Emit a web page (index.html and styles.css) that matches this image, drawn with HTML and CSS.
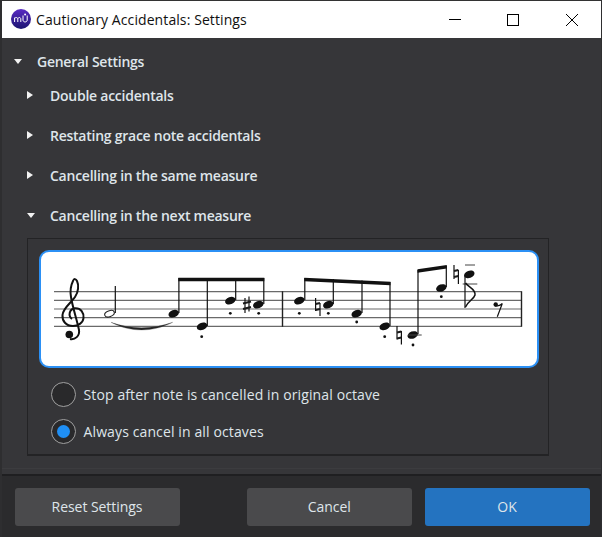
FILE: index.html
```html
<!DOCTYPE html>
<html lang="en">

<head>
    <meta charset="UTF-8">
    <title>Cautionary Accidentals: Settings</title>
    <link rel="stylesheet" href="styles.css">
</head>

<body>
    <div class="window">
        <div class="titlebar">
            <svg class="app-logo" viewBox="0 0 20 20" width="20" height="20">
                <defs>
                    <linearGradient id="logo-fill" x1="0" y1="0" x2="0" y2="1">
                        <stop offset="0" stop-color="#5a2bc4" />
                        <stop offset="1" stop-color="#1a1470" />
                    </linearGradient>
                </defs>
                <circle cx="10" cy="10" r="10" fill="url(#logo-fill)" />
                <path d="M3.6 13V8.6M3.6 9.4C4.4 8.2 6.4 8.2 6.8 9.6V13M6.8 9.6C7.4 8.2 9.4 8.2 9.8 9.6V13" fill="none" stroke="#fff" stroke-width="1" />
                <path d="M12 6.5V11C12 13.6 16.2 13.6 16.2 11V6.5" fill="none" stroke="#fff" stroke-width="1" />
                <circle cx="14.1" cy="5.6" r="1" fill="#fff" />
            </svg>
            <div class="title">Cautionary Accidentals: Settings</div>
            <div class="win-controls">
                <div class="win-btn">
                    <svg viewBox="0 0 12 12" width="12" height="12"><path d="M0 5.5H12" stroke="#000" fill="none" /></svg>
                </div>
                <div class="win-btn">
                    <svg viewBox="0 0 12 12" width="12" height="12"><rect x="0.5" y="0.5" width="11" height="11" stroke="#000" fill="none" /></svg>
                </div>
                <div class="win-btn">
                    <svg viewBox="0 0 12 12" width="12" height="12"><path d="M0 0L12 12M12 0L0 12" stroke="#000" fill="none" /></svg>
                </div>
            </div>
        </div>

        <div class="content">
            <div class="tree-row top-row"><span class="arrow-down"></span>General Settings</div>
            <div class="tree-row"><span class="arrow-right"></span>Double accidentals</div>
            <div class="tree-row"><span class="arrow-right"></span>Restating grace note accidentals</div>
            <div class="tree-row"><span class="arrow-right"></span>Cancelling in the same measure</div>
            <div class="tree-row"><span class="arrow-down"></span>Cancelling in the next measure</div>

            <div class="panel">
                <div class="score-card">
                    <svg class="score" viewBox="41 252 495.5 114" width="495.5" height="114">
                        <g class="staff">
                            <path d="M54 291.7H521.5M54 300.3H521.5M54 309H521.5M54 317.7H521.5M54 326.3H521.5" />
                        </g>
                        <g class="bars">
                            <path d="M282.5 291.2V326.8M521.5 291.2V326.8" />
                        </g>

                        <!-- clef -->
                        <path class="clef" d="M72 319C68 316 69 309 75 308.3C81 308 84 313 83.5 318C83 323 78 326 73 326C66 326 62 321 62.5 315C63 308 71 303 75 297C78.5 292 79 285 77 281C76 279 74 278 73 281C71 285 70 291 71 297C72.5 307 77 320 79 330C80 336 75 340 70 339" />
                        <circle cx="69.3" cy="334.5" r="3.8" />

                        <!-- first group -->
                        <ellipse class="hollow" cx="109.5" cy="313.7" rx="5" ry="2.9" transform="rotate(-20 109.5 313.7)" />
                        <path class="stem" d="M115.3 286V313" />
                        <path class="tie" d="M111 322.3C130 332.5 153 332.5 172.7 322.3C153 329.5 130 329.5 111 322.3Z" />

                        <ellipse cx="173.7" cy="313.7" rx="5.4" ry="3.6" transform="rotate(-20 173.7 313.7)" />
                        <ellipse cx="202" cy="326.3" rx="5.4" ry="3.6" transform="rotate(-20 202 326.3)" />
                        <ellipse cx="230.3" cy="300.7" rx="5.4" ry="3.6" transform="rotate(-20 230.3 300.7)" />
                        <ellipse cx="258.3" cy="304.7" rx="5.4" ry="3.6" transform="rotate(-20 258.3 304.7)" />
                        <path class="stem" d="M178.9 278V313M207.3 278V326M235.7 278V300M263.8 278V304" />
                        <path d="M178.3 277.7H264.3V281.2H178.3Z" />
                        <circle cx="201.7" cy="336.7" r="1.4" />
                        <circle cx="230.3" cy="313.3" r="1.4" />
                        <circle cx="258.7" cy="313.3" r="1.4" />
                        <path class="stem" d="M245 298V313M249 296.5V311.5" />
                        <path class="acc-bar" d="M243 303.5L251 301.5M243 309L251 307" />

                        <!-- second group -->
                        <ellipse cx="299.3" cy="300.7" rx="5.4" ry="3.6" transform="rotate(-20 299.3 300.7)" />
                        <ellipse cx="328.3" cy="304.7" rx="5.4" ry="3.6" transform="rotate(-20 328.3 304.7)" />
                        <ellipse cx="356.7" cy="313.7" rx="5.4" ry="3.6" transform="rotate(-20 356.7 313.7)" />
                        <ellipse cx="384.7" cy="326.3" rx="5.4" ry="3.6" transform="rotate(-20 384.7 326.3)" />
                        <path class="stem" d="M304.8 278V300M333.3 279V304M362 280.5V313M390 282V326" />
                        <path d="M304.3 277.7L390.5 281.7V285.2L304.3 281.2Z" />
                        <circle cx="299.3" cy="313.3" r="1.4" />
                        <circle cx="328.3" cy="313.3" r="1.4" />
                        <circle cx="356.7" cy="322" r="1.4" />
                        <circle cx="384.7" cy="336.7" r="1.4" />
                        <path class="stem" d="M315.6 298V311M320 303V316" />
                        <path class="acc-bar" d="M315.6 304L320 303M315.6 310L320 309" />

                        <!-- third group -->
                        <ellipse cx="412.7" cy="335" rx="5.4" ry="3.6" transform="rotate(-20 412.7 335)" />
                        <path class="ledger" d="M408 335H421.7" />
                        <ellipse cx="441.3" cy="288" rx="5.4" ry="3.6" transform="rotate(-20 441.3 288)" />
                        <path class="stem" d="M418 270V334M446.3 266V287" />
                        <path d="M417.5 269.3L446.8 265V268.5L417.5 272.8Z" />
                        <circle cx="413" cy="345" r="1.4" />
                        <circle cx="441.3" cy="296.7" r="1.4" />
                        <path class="stem" d="M397 326V339.5M401.4 331V344.5" />
                        <path class="acc-bar" d="M397 332.5L401.4 331.5M397 338.5L401.4 337.5" />
                        <path class="stem" d="M454 265V279M458.4 270V284" />
                        <path class="acc-bar" d="M454 271L458.4 270M454 277L458.4 276" />

                        <ellipse cx="469.3" cy="274.3" rx="5.4" ry="3.6" transform="rotate(-20 469.3 274.3)" />
                        <path class="ledger" d="M465 265H475M462.7 284H477.3" />
                        <path class="stem" d="M465 275V308" />
                        <path class="flag" d="M465.5 283C468 287 476 289 475 295C474 299 468 301 465.5 307" />

                        <circle cx="495.7" cy="304.5" r="2.2" />
                        <path class="stem" d="M495 306C498 306 500.5 305.5 502.3 303.5L497.3 316.7" />
                    </svg>
                </div>

                <div class="radio-row">
                    <span class="radio"></span>
                    <span>Stop after note is cancelled in original octave</span>
                </div>
                <div class="radio-row">
                    <span class="radio checked"></span>
                    <span>Always cancel in all octaves</span>
                </div>
            </div>

            <div class="tree-end"></div>
        </div>

        <div class="footer">
            <button class="btn">Reset Settings</button>
            <div class="footer-right">
                <button class="btn">Cancel</button>
                <button class="btn primary">OK</button>
            </div>
        </div>
    </div>
</body>

</html>
```

FILE: styles.css
```css
* {
    box-sizing: border-box;
}

html,
body {
    margin: 0;
    padding: 0;
}

body {
    font-family: "Open Sans", "Noto Sans", sans-serif;
    font-size: 14px;
    color: #e4e8ec;
    background: #2b2b2d;
}

.window {
    width: 602px;
    height: 537px;
    display: flex;
    flex-direction: column;
    border-top: 1px solid #333;
    border-left: 2px solid #2e2e30;
    border-right: 1px solid #2e2e30;
}

.titlebar {
    height: 37px;
    flex: none;
    background: #fff;
    color: #101010;
    display: flex;
    align-items: center;
    padding-left: 9px;
}

.app-logo {
    flex: none;
    margin-top: -1px;
}

.title {
    margin-left: 5px;
    font-size: 14px;
    letter-spacing: 0.09px;
    flex: 1;
}

.win-controls {
    display: flex;
}

.win-btn {
    width: 58.5px;
    height: 37px;
    display: flex;
    align-items: center;
    justify-content: center;
}

.content {
    height: 436px;
    flex: none;
    background: #363639;
    position: relative;
    padding-top: 9px;
}

.tree-row {
    height: 40px;
    display: flex;
    align-items: center;
    padding-left: 25px;
    font-size: 14px;
    font-weight: 600;
    letter-spacing: -0.25px;
    color: #dfe5ea;
}

.top-row {
    height: 28px;
    padding-left: 12px;
}

.arrow-right {
    width: 0;
    height: 0;
    margin-right: 17px;
    border-top: 4px solid transparent;
    border-bottom: 4px solid transparent;
    border-left: 6px solid #f2f2f2;
}

.arrow-down {
    width: 0;
    height: 0;
    margin-right: 15px;
    border-left: 4px solid transparent;
    border-right: 4px solid transparent;
    border-top: 5.5px solid #f2f2f2;
}

.panel {
    width: 522px;
    height: 218px;
    margin-top: 3px;
    margin-left: 25px;
    border: 1px solid #232325;
    border-bottom-width: 2px;
    padding: 11px 0 0 11px;
    background: #353538;
}

.score-card {
    width: 499.5px;
    height: 118px;
    background: #fff;
    border: 2px solid #2b90f5;
    border-radius: 10px;
    overflow: hidden;
    margin-bottom: 8px;
}

.score {
    display: block;
    fill: #111;
    stroke: none;
}

.staff path {
    stroke: #6a6a6a;
    stroke-width: 1.2;
    fill: none;
}

.bars path {
    stroke: #222;
    stroke-width: 1.4;
    fill: none;
}

.stem {
    stroke: #111;
    stroke-width: 1.2;
    fill: none;
}

.flag {
    stroke: #111;
    stroke-width: 1.5;
    fill: none;
}

.acc-bar {
    stroke: #1a1a1a;
    stroke-width: 2.2;
    fill: none;
}

.ledger {
    stroke: #444;
    stroke-width: 1;
    fill: none;
}

.clef {
    stroke: #111;
    stroke-width: 2;
    fill: none;
}

.hollow {
    fill: #fff;
    stroke: #222;
    stroke-width: 1.1;
}

.tie {
    fill: #222;
    stroke: #555;
    stroke-width: 0.3;
}

.radio-row {
    height: 37px;
    display: flex;
    align-items: center;
    gap: 7.5px;
    padding-left: 12px;
    font-size: 14px;
    letter-spacing: 0.12px;
    color: #dfe5ea;
}

.radio {
    width: 25px;
    height: 25px;
    flex: none;
    border-radius: 50%;
    border: 1.5px solid #a0a0a0;
    background: #29292b;
    display: flex;
    align-items: center;
    justify-content: center;
}

.radio.checked::after {
    content: "";
    width: 13px;
    height: 13px;
    border-radius: 50%;
    background: #1f8ff5;
}

.tree-end {
    position: absolute;
    left: 0;
    right: 0;
    bottom: 5px;
    height: 1px;
    background: #3c3c3f;
}

.footer {
    flex: 1;
    border-top: 2px solid #1f1f21;
    background: #2b2b2d;
    display: flex;
    justify-content: space-between;
    padding: 12px 11.5px 0 12.5px;
}

.footer-right {
    display: flex;
    gap: 12.7px;
}

.btn {
    width: 165px;
    height: 38px;
    border: none;
    border-radius: 3px;
    background: #4a4a4c;
    color: #dfe5ea;
    font-family: "Open Sans", "Noto Sans", sans-serif;
    font-size: 14px;
    letter-spacing: -0.05px;
    padding-bottom: 3px;
}

.btn.primary {
    background: #2473c0;
}
```
